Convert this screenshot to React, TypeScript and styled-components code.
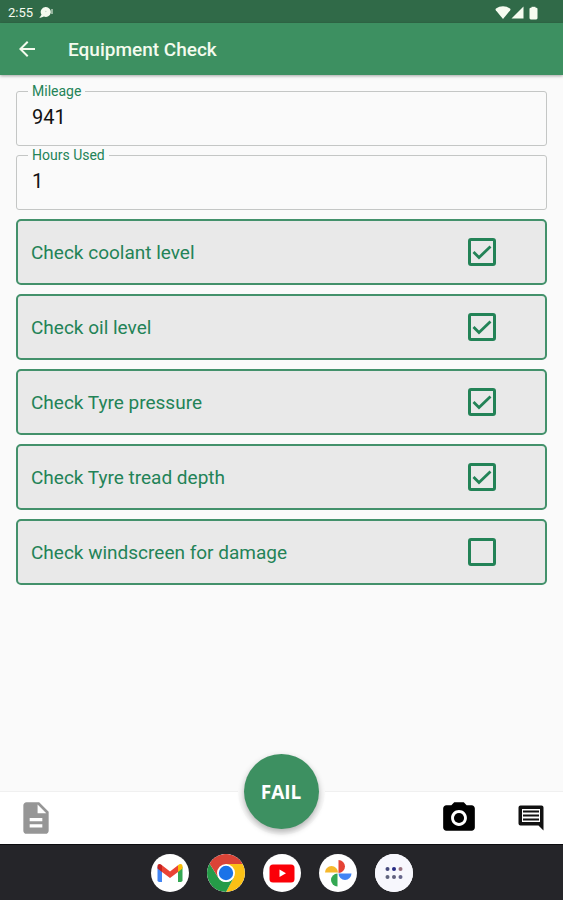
import React, { useState } from "react";
import styled, { createGlobalStyle } from "styled-components";
import { MdArrowBack, MdCameraAlt, MdDescription } from "react-icons/md";

const GlobalStyle = createGlobalStyle`
  *, *::before, *::after { box-sizing: border-box; }
  body {
    margin: 0;
    background: #fafafa;
    font-family: Roboto, "Liberation Sans", sans-serif;
  }
  button { font: inherit; }
`;

const green = "#3d9061";
const deepGreen = "#238357";

const Screen = styled.div`
  display: flex;
  flex-direction: column;
  min-height: 100vh;
`;

const StatusBar = styled.div`
  display: flex;
  align-items: center;
  justify-content: space-between;
  height: 23px;
  padding: 2px 25px 0 8px;
  background: #306a48;
  font-size: 13px;
`;

const StatusGroup = styled.div<{ $gap: number }>`
  display: flex;
  align-items: center;
  gap: ${(p) => p.$gap}px;
  color: #f6fbf0;
`;

const AppBar = styled.header`
  position: relative;
  display: flex;
  align-items: center;
  gap: 29px;
  height: 52px;
  padding: 0 15px;
  background: ${green};
  color: #f4fbee;
  box-shadow: 0 1px 3px rgba(0, 0, 0, 0.35);
`;

const IconButton = styled.button<{ $color?: string }>`
  display: flex;
  padding: 0;
  border: 0;
  background: none;
  color: ${(p) => p.$color ?? "inherit"};
  cursor: pointer;
`;

const Title = styled.h1`
  margin: 0;
  font-size: 19px;
  font-weight: 500;
`;

const Content = styled.main`
  flex: 1;
  display: flex;
  flex-direction: column;
  gap: 9px;
  padding: 9px 16px;
`;

const Fields = styled.div`
  display: flex;
  flex-direction: column;
  gap: 2px;
`;

const FieldBox = styled.fieldset`
  min-width: 0;
  height: 62px;
  margin: 0;
  padding: 0 11px;
  border: 1px solid #c4c6c5;
  border-radius: 3px;
`;

const FieldLegend = styled.legend`
  padding: 0 4px;
  color: ${deepGreen};
  font-size: 14px;
  line-height: 14px;
`;

const FieldInput = styled.input`
  display: block;
  width: 100%;
  height: 38px;
  padding: 0 4px;
  border: 0;
  outline: 0;
  background: none;
  color: #111;
  font: 400 20px Roboto, sans-serif;
`;

const CheckList = styled.div`
  display: flex;
  flex-direction: column;
  gap: 9px;
`;

const CheckRow = styled.label`
  display: flex;
  align-items: center;
  justify-content: space-between;
  height: 66px;
  padding: 0 49px 0 13px;
  border: 2px solid #43916b;
  border-radius: 5px;
  background: #e9e9e9;
  color: ${deepGreen};
  font-size: 19px;
  cursor: pointer;
`;

const CheckMark = styled.span`
  display: grid;
  color: ${deepGreen};

  > * {
    grid-area: 1 / 1;
  }

  svg {
    pointer-events: none;
  }
`;

const CheckInput = styled.input`
  appearance: none;
  width: 28px;
  height: 28px;
  margin: 0;
  border: 3px solid ${deepGreen};
  border-radius: 3px;

  &:not(:checked) + svg {
    visibility: hidden;
  }
`;

const BottomBar = styled.footer`
  position: relative;
  display: flex;
  align-items: center;
  justify-content: space-between;
  height: 53px;
  padding: 0 17px;
  border-top: 1px solid #f0f0f0;
  background: #fff;
`;

const Actions = styled.div`
  display: flex;
  align-items: center;
  gap: 38px;
`;

const ResultButton = styled.button`
  position: absolute;
  left: 50%;
  bottom: 15px;
  width: 75px;
  height: 75px;
  margin-left: -38px;
  padding: 0;
  border: 0;
  border-radius: 50%;
  background: ${green};
  color: #fff;
  font-family: "Open Sans", sans-serif;
  font-size: 19px;
  font-weight: 700;
  box-shadow: 0 3px 6px rgba(0, 0, 0, 0.3), 0 0 0 6px #fafafa;
  cursor: pointer;
`;

const Dock = styled.nav`
  display: flex;
  align-items: center;
  justify-content: center;
  gap: 18px;
  height: 56px;
  border-top: 1px solid #0c0c0f;
  background: #252529;
`;

const DockButton = styled.button`
  display: flex;
  width: 38px;
  height: 38px;
  padding: 0;
  border: 0;
  border-radius: 50%;
  overflow: hidden;
  background: #fff;
  cursor: pointer;
`;

const ChatIcon = () => (
  <svg width="15" height="13" viewBox="0 0 15 13" fill="currentColor" aria-hidden="true">
    <path d="M6.5 1a5 5 0 1 1-1.6 9.6L3 11.2.3 12l2.2-3.3A5 5 0 0 1 6.5 1Z" />
    <circle cx="6.8" cy="5.5" r="0.8" fill="#c9dccd" />
    <rect x="12" y="3" width="2" height="5" opacity="0.5" />
  </svg>
);

const WifiIcon = () => (
  <svg width="16" height="13" viewBox="0 0 16 13" fill="currentColor" aria-hidden="true">
    <path d="M8 13 .8 4.2C.3 3.5.5 3 1 2.6a12 12 0 0 1 14 0c.5.4.7.9.2 1.6Z" />
  </svg>
);

const SignalIcon = () => (
  <svg width="13" height="13" viewBox="0 0 13 13" fill="currentColor" aria-hidden="true">
    <path d="M12.5 0.5v12H0.5Z" />
  </svg>
);

const BatteryIcon = () => (
  <svg width="9" height="14" viewBox="0 0 9 14" fill="currentColor" aria-hidden="true">
    <rect x="2.5" y="0.8" width="4" height="3" />
    <rect x="0.5" y="1.8" width="8" height="11.6" rx="1.3" />
  </svg>
);

const TickIcon = () => (
  <svg width="28" height="28" viewBox="0 0 28 28" fill="none" stroke="currentColor" strokeWidth="2.8" aria-hidden="true">
    <path d="m5.5 14 5.5 5.5L22.5 8.5" />
  </svg>
);

const CommentIcon = () => (
  <svg width="30" height="30" viewBox="0 0 30 30" aria-hidden="true">
    <path d="M4.5 2.500h21a2 2 0 0 1 2 2V27.500L22.500 22.500H4.500a2 2 0 0 1-2-2v-16a2 2 0 0 1 2-2Z" fill="currentColor" />
    <rect x="6" y="6" width="18" height="13" fill="#fff" />
    <path d="M7 8.5h16M7 12.5h16M7 16.5h16" stroke="currentColor" strokeWidth="2.2" />
  </svg>
);

const GmailIcon = () => (
  <svg width="38" height="38" viewBox="0 0 38 38" aria-hidden="true">
    <path d="M6.5 12.5 11 15.8V28H8.3A1.8 1.8 0 0 1 6.5 26.2Z" fill="#4285f4" />
    <path d="M27 15.8 31.5 12.5V26.2A1.8 1.8 0 0 1 29.7 28H27Z" fill="#34a853" />
    <path d="M11 11.3 19 17.4 27 11.3V17.9L19 23.9 11 17.9Z" fill="#ea4335" />
    <path d="M6.5 12.5C6.5 9.5 9.1 9.4 11 11.3V17.9L6.5 14.5Z" fill="#c5221f" />
    <path d="M31.5 12.5C31.5 9.5 28.9 9.4 27 11.3V17.9L31.5 14.5Z" fill="#fbbc04" />
  </svg>
);

const ChromeIcon = () => (
  <svg width="38" height="38" viewBox="0 0 38 38" aria-hidden="true">
    <path d="M19 19 2.5 9.5A19 19 0 0 1 35.5 9.5V10H19Z" fill="#db4437" />
    <path d="M19 10H35.7A19 19 0 0 1 19 38L26.8 23.5Z" fill="#fbc116" />
    <path d="M2.5 9.5 11.2 23.5A9 9 0 0 0 26.8 23.5L19 38A19 19 0 0 1 2.5 9.5Z" fill="#259b48" />
    <path d="M2.5 9.5 11.2 23.5 14 16l5-6Z" fill="#db4437" />
    <circle cx="19" cy="19" r="9" fill="#fff" />
    <circle cx="19" cy="19" r="7.2" fill="#1a73e8" />
  </svg>
);

const YouTubeIcon = () => (
  <svg width="38" height="38" viewBox="0 0 38 38" aria-hidden="true">
    <rect x="6.5" y="10.5" width="25" height="18" rx="3.5" fill="#fb0007" />
    <path d="M16.5 15.5V23L23 19.3Z" fill="#fff" />
  </svg>
);

const PhotosIcon = () => (
  <svg width="38" height="38" viewBox="0 0 38 38" aria-hidden="true">
    <path d="M19.5 6a6.5 6.5 0 0 1 0 13Z" fill="#e54335" />
    <path d="M32.5 19.5a6.5 6.5 0 0 1-13 0Z" fill="#4285f4" />
    <path d="M18.5 32.5a6.5 6.5 0 0 1 0-13Z" fill="#34a853" />
    <path d="M6 18.5a6.5 6.5 0 0 1 13 0Z" fill="#f6b82c" />
  </svg>
);

const AppsIcon = () => (
  <svg width="38" height="38" viewBox="0 0 38 38" aria-hidden="true">
    <rect width="38" height="38" fill="#f7f7fd" />
    <circle cx="12.5" cy="15" r="2" fill="#45497c" />
    <circle cx="19" cy="15" r="2" fill="#262a83" />
    <circle cx="25.5" cy="15" r="2" fill="#96707f" />
    <circle cx="12.5" cy="23" r="2" fill="#60647e" />
    <circle cx="19" cy="23" r="2" fill="#60607c" />
    <circle cx="25.5" cy="23" r="2" fill="#65658b" />
  </svg>
);

const dockApps = [
  { name: "Gmail", Icon: GmailIcon },
  { name: "Chrome", Icon: ChromeIcon },
  { name: "YouTube", Icon: YouTubeIcon },
  { name: "Photos", Icon: PhotosIcon },
  { name: "All apps", Icon: AppsIcon },
];

const initialChecks = [
  { label: "Check coolant level", done: true },
  { label: "Check oil level", done: true },
  { label: "Check Tyre pressure", done: true },
  { label: "Check Tyre tread depth", done: true },
  { label: "Check windscreen for damage", done: false },
];

function Field({ label, initial }: { label: string; initial: string }) {
  const [value, setValue] = useState(initial);
  return (
    <FieldBox>
      <FieldLegend>{label}</FieldLegend>
      <FieldInput
        aria-label={label}
        inputMode="numeric"
        value={value}
        onChange={(e) => setValue(e.target.value)}
      />
    </FieldBox>
  );
}

export default function App() {
  const [checks, setChecks] = useState(initialChecks);

  const toggle = (index: number) =>
    setChecks(checks.map((c, i) => (i === index ? { ...c, done: !c.done } : c)));

  return (
    <Screen>
      <GlobalStyle />
      <StatusBar>
        <StatusGroup $gap={6}>
          <span>2:55</span>
          <ChatIcon />
        </StatusGroup>
        <StatusGroup $gap={5}>
          <StatusGroup $gap={0}>
            <WifiIcon />
            <SignalIcon />
          </StatusGroup>
          <BatteryIcon />
        </StatusGroup>
      </StatusBar>
      <AppBar>
        <IconButton aria-label="Back">
          <MdArrowBack size={24} />
        </IconButton>
        <Title>Equipment Check</Title>
      </AppBar>
      <Content>
        <Fields>
          <Field label="Mileage" initial="941" />
          <Field label="Hours Used" initial="1" />
        </Fields>
        <CheckList>
          {checks.map((c, i) => (
            <CheckRow key={c.label}>
              {c.label}
              <CheckMark>
                <CheckInput type="checkbox" checked={c.done} onChange={() => toggle(i)} />
                <TickIcon />
              </CheckMark>
            </CheckRow>
          ))}
        </CheckList>
      </Content>
      <BottomBar>
        <IconButton aria-label="Documents" $color="#969696">
          <MdDescription size={38} />
        </IconButton>
        <ResultButton>FAIL</ResultButton>
        <Actions>
          <IconButton aria-label="Take photo" $color="#000">
            <MdCameraAlt size={38} />
          </IconButton>
          <IconButton aria-label="Comments" $color="#111">
            <CommentIcon />
          </IconButton>
        </Actions>
      </BottomBar>
      <Dock aria-label="Dock">
        {dockApps.map(({ name, Icon }) => (
          <DockButton key={name} aria-label={name}>
            <Icon />
          </DockButton>
        ))}
      </Dock>
    </Screen>
  );
}
